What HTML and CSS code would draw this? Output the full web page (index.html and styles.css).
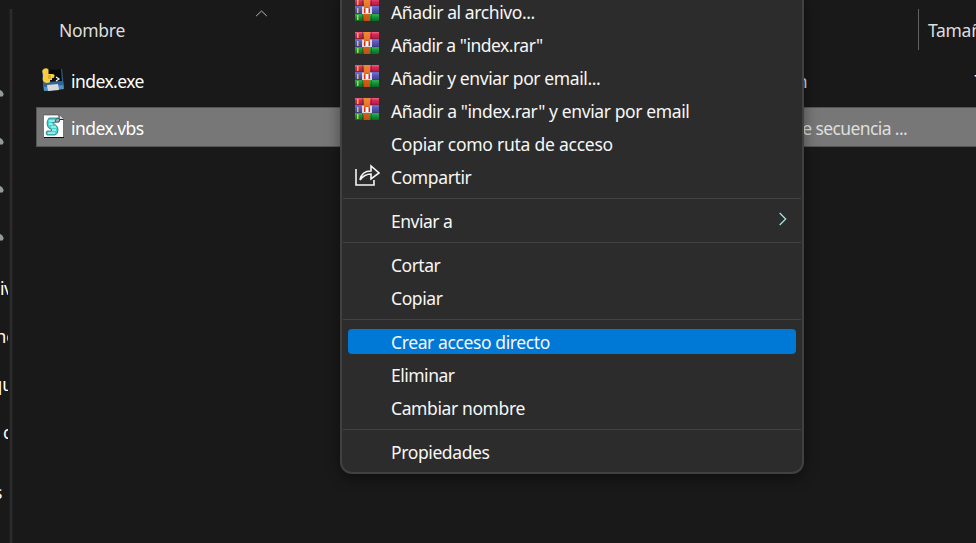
FILE: index.html
```
<!DOCTYPE html>
<html lang="es">
<head>
<meta charset="utf-8">
<title>index</title>
<link rel="stylesheet" href="styles.css">
</head>
<body>
<svg class="defs" width="0" height="0">
  <defs>
    <linearGradient id="red" x2="0" y2="1"><stop stop-color="#f06a86"/><stop offset=".3" stop-color="#d92c56"/><stop offset="1" stop-color="#a81c42"/></linearGradient>
    <linearGradient id="blue" x2="0" y2="1"><stop stop-color="#7777d2"/><stop offset=".4" stop-color="#5656b9"/><stop offset="1" stop-color="#40408e"/></linearGradient>
    <linearGradient id="green" x2="0" y2="1"><stop stop-color="#39b656"/><stop offset=".4" stop-color="#16973b"/><stop offset="1" stop-color="#0a6826"/></linearGradient>
    <linearGradient id="belt" x2="0" y2="1"><stop stop-color="#f28a35"/><stop offset="1" stop-color="#c94c0c"/></linearGradient>
    <symbol id="rar" viewBox="0 0 24 22">
      <path fill="url(#red)" d="M0 0h24v7H0z"/><path fill="url(#blue)" d="M0 7h24v8H0z"/><path fill="url(#green)" d="M0 15h24v7H0z"/>
      <path fill="#222" opacity=".35" d="M7 0h1v22H7zM16 0h1v22h-1zM0 6.500h24v.7H0zM0 14.500h24v.7H0z"/>
      <path fill="#efbd34" d="M2 1h1.500v5H2zM2 9h1.500v5H2zM2 16h1.500v5H2z"/>
      <path fill="url(#belt)" d="M9 0h6v22H9z"/>
      <path fill="#ddd5dc" d="M7 7.500h2V14h6V7.500h2V15H7z"/><path fill="#df2d14" d="M9 10q3-3 6 0v4H9z"/><path fill="#fff" d="M10.500 9h3v5h-3z"/>
    </symbol>
    <symbol id="pin" viewBox="0 0 4 8"><path fill="#929a9e" d="M0 0c1.500.2 3.600 2.500 3.600 4.500C3.600 6 2 7 0 6.500z"/></symbol>
  </defs>
</svg>
<div class="window">
  <aside class="sidebar">
    <div class="side-row"><svg class="pin"><use href="#pin"/></svg></div>
    <div class="side-row"><svg class="pin"><use href="#pin"/></svg></div>
    <div class="side-row"><svg class="pin"><use href="#pin"/></svg></div>
    <div class="side-row"><svg class="pin"><use href="#pin"/></svg></div>
    <div class="side-row label label-a">iv</div>
    <div class="side-row label label-b">nc</div>
    <div class="side-row label label-c">qu</div>
    <div class="side-row label label-d">c</div>
    <div class="side-row label label-e">s</div>
  </aside>
  <div class="splitter"></div>
  <main class="files">
    <svg class="sort" viewBox="0 0 12 7"><path fill="none" stroke="#bbb" d="M.7 6 6 1l5.300 5"/></svg>
    <div class="header">
      <span class="col-name">Nombre</span>
      <span class="col-size">Tamaño</span>
    </div>
    <div class="file">
      <svg class="file-icon" viewBox="0 0 24 24">
        <path fill="#2d6494" d="m1 3 20-2 2 20-20 2z"/><path fill="#4e91c4" d="m2 15 20-2 .8 8L3 23z"/><path fill="#2d6494" d="m2 14 20-1 .5 4L2.500 19z"/><path fill="#08090b" d="m3 2 17-1 1 12-17 1z"/>
        <path fill="#d8d9da" d="m6 17 11-1 1 6-11 1z"/><path fill="none" stroke="#fff" stroke-width="1.200" d="m15 9 3 2-3 2"/>
        <path fill="#f9cd3e" d="M1.500 2q3-3 6-.5V6H12q3 1 .5 4H11v2H9v2q-3 2-6 0-2-2-1-5V6Q1 4 1.500 2z"/><path fill="none" stroke="#a87919" stroke-width=".7" d="M7 8h3M7 10h3"/>
      </svg>
      <span class="file-name">index.exe</span>
      <span class="file-type app">Aplicación</span>
      <span class="file-size">7</span>
    </div>
    <div class="file selected">
      <svg class="file-icon" viewBox="0 0 24 24">
        <path fill="#fff" stroke="#444" stroke-width=".6" d="M2.500 1h16l4 4v18.500h-20z"/><path fill="#ddd" stroke="#222" d="M18 1v4.500h4.500"/>
        <path fill="#45d6d2" stroke="#267077" stroke-width=".8" d="M8 4h9q3 1 1 4h-3l-4 1q6 2 6 7 0 4-3 5H6q-2-2 0-4h4l1-1q-5-2-5-6 0-4 2-6z"/>
        <path fill="none" stroke="#e4ffff" stroke-width="1.200" d="M8 7h6M8 10h4m-2 3h5m-4 3h4m-8 3h7"/>
        <path fill="#aaa" stroke="#234" stroke-width=".6" d="M15 5q5-2 3 3h-4z"/><path stroke="#111" d="M3 23.500h20"/>
      </svg>
      <span class="file-name">index.vbs</span>
      <span class="file-type">Archivo de secuencia ...</span>
    </div>
  </main>
</div>
<nav class="menu">
  <div class="item"><svg class="icon"><use href="#rar"/></svg><span>Añadir al archivo...</span></div>
  <div class="item snug"><svg class="icon"><use href="#rar"/></svg><span>Añadir a "index.rar"</span></div>
  <div class="item"><svg class="icon"><use href="#rar"/></svg><span>Añadir y enviar por email...</span></div>
  <div class="item"><svg class="icon"><use href="#rar"/></svg><span>Añadir a "index.rar" y enviar por email</span></div>
  <div class="item wide"><span>Copiar como ruta de acceso</span></div>
  <div class="item"><svg class="icon share" viewBox="0 0 26 22"><path fill="none" stroke="#f5f5f5" stroke-width="1.600" d="M2 5v16h18v-5M6 16c1-6 5-9 11-9V2l8 7-8 6v-5c-5 0-8 2-11 6z"/></svg><span>Compartir</span></div>
  <hr>
  <div class="item snug"><span>Enviar a</span><svg class="arrow" viewBox="0 0 8 14"><path fill="none" stroke="#a5e9e8" stroke-width="1.200" d="m.7 1 6 6-6 6"/></svg></div>
  <hr>
  <div class="item snug"><span>Cortar</span></div>
  <div class="item"><span>Copiar</span></div>
  <hr>
  <div class="item active"><span>Crear acceso directo</span></div>
  <div class="item snug"><span>Eliminar</span></div>
  <div class="item"><span>Cambiar nombre</span></div>
  <hr>
  <div class="item"><span>Propiedades</span></div>
</nav>
</body>
</html>
```
FILE: styles.css
```
* { box-sizing: border-box; }
body { margin: 0; width: 976px; height: 543px; overflow: hidden; background: #191919; color: #fff; font: 17.5px/24px "Noto Sans", "Open Sans", sans-serif; }
.defs { position: absolute; }
.window { display: flex; height: 543px; }
.sidebar { width: 8px; padding-top: 70px; overflow: hidden; flex: none; }
.side-row { height: 48px; line-height: 48px; white-space: nowrap; }
.pin { display: block; width: 4px; height: 8px; transform: translateY(20px); }
.label { line-height: 53px; }
.label-a { margin-left: 0; letter-spacing: -.5px; }
.label-b { margin-left: -4.5px; }
.label-c { margin-left: -8.5px; }
.label-d { margin-left: 3px; }
.label-e { margin: 12px 0 0 -6px; }
.splitter { width: 4px; margin: 9px 0 0 1px; background: #2b2b2b; border: solid #202020; border-width: 0 1px; flex: none; }
.files { position: relative; width: 963px; flex: none; overflow: hidden; padding: 9px 0 0 23px; }
.sort { position: absolute; left: 242px; top: 10px; width: 13px; height: 7px; }
.header { height: 41px; display: flex; align-items: center; color: #dedede; letter-spacing: -.3px; }
.col-name { width: 882px; padding-left: 23px; flex: none; }
.col-size { height: 41px; line-height: 43px; border-left: 1px solid #626262; padding-left: 9px; }
.file { height: 40px; margin-top: 11px; width: 945px; display: flex; align-items: center; white-space: nowrap; letter-spacing: -.55px; }
.file + .file { margin-top: 6px; }
.file-icon { width: 24px; height: 24px; margin: -3px 6px 0 5px; flex: none; }
.file-name { width: 640px; flex: none; }
.file-type { width: 264px; padding-left: 20px; flex: none; color: #dedede; letter-spacing: -.6px; }
.app { width: 96px; margin-right: 167px; padding-left: 0; text-align: right; }
.selected { background: #777; border: 1px solid #555; border-right: 0; }
.selected .file-icon { margin-left: 4px; }
.selected span { padding-top: 2px; }
.menu { position: absolute; left: 340px; top: -7px; display: flex; flex-direction: column; width: 464px; height: 481px; padding-top: 2px; background: #2c2c2c; border: 2px solid #414141; border-top: 0; border-radius: 0 0 12px 12px; box-shadow: 0 5px 14px #0006; letter-spacing: -.39px; }
.item { display: flex; align-items: center; position: relative; flex: none; height: 25px; margin: 4px 6px; padding-left: 43px; border-radius: 4px; white-space: nowrap; color: #f7f7f7; }
.item span { line-height: 25px; padding-top: 1px; }
.snug { letter-spacing: -.5px; }
.wide { letter-spacing: -.25px; }
.active { background: #0078d6; }
.icon { position: absolute; left: 7px; top: 0; width: 24px; height: 22px; }
.share { width: 26px; left: 6px; top: 0; }
.arrow { width: 8px; height: 14px; margin: -3px 9px 0 auto; }
hr { flex: none; height: 1px; margin: 5px 1px; border: 0; background: #424242; }
```
